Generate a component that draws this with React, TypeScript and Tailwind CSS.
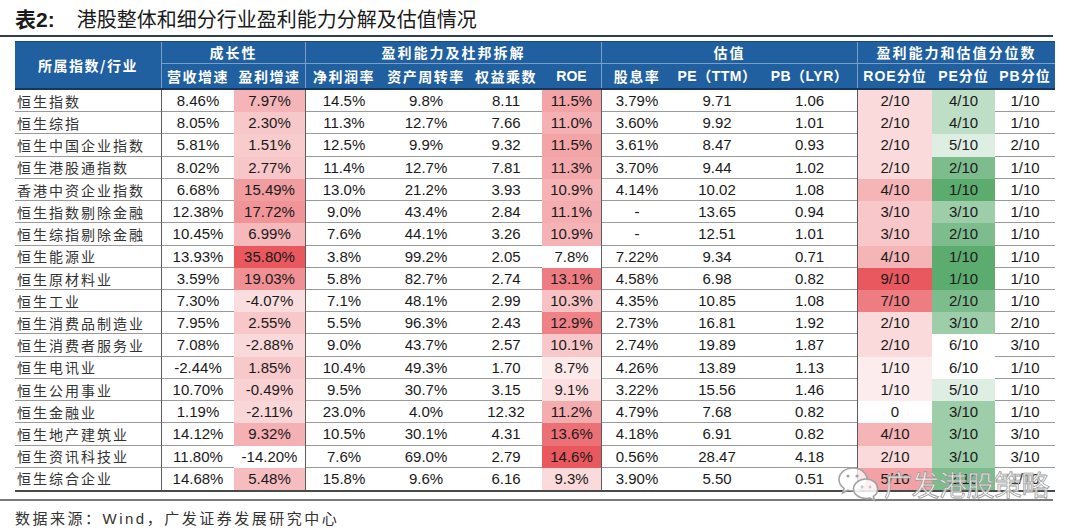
const GRID =
  "grid grid-cols-[147px_72px_72px_76px_88px_72px_60px_70px_90px_96px_74px_63px_60px]";
const SANS = "font-['Liberation_Sans','Noto_Sans_CJK_SC',sans-serif]";
const CJK = "font-['Noto_Sans_CJK_SC','Liberation_Sans',sans-serif]";

// name, 营收, 盈利, 净利润率, 资产周转率, 权益乘数, ROE, 股息率, PE, PB, ROE分位, PE分位, PB分位
const ROWS: string[][] = [
  ["恒生指数", "8.46%", "7.97%", "14.5%", "9.8%", "8.11", "11.5%", "3.79%", "9.71", "1.06", "2/10", "4/10", "1/10"],
  ["恒生综指", "8.05%", "2.30%", "11.3%", "12.7%", "7.66", "11.0%", "3.60%", "9.92", "1.01", "2/10", "4/10", "1/10"],
  ["恒生中国企业指数", "5.81%", "1.51%", "12.5%", "9.9%", "9.32", "11.5%", "3.61%", "8.47", "0.93", "2/10", "5/10", "2/10"],
  ["恒生港股通指数", "8.02%", "2.77%", "11.4%", "12.7%", "7.81", "11.3%", "3.70%", "9.44", "1.02", "2/10", "2/10", "1/10"],
  ["香港中资企业指数", "6.68%", "15.49%", "13.0%", "21.2%", "3.93", "10.9%", "4.14%", "10.02", "1.08", "4/10", "1/10", "1/10"],
  ["恒生指数剔除金融", "12.38%", "17.72%", "9.0%", "43.4%", "2.84", "11.1%", "-", "13.65", "0.94", "3/10", "3/10", "1/10"],
  ["恒生综指剔除金融", "10.45%", "6.99%", "7.6%", "44.1%", "3.26", "10.9%", "-", "12.51", "1.01", "3/10", "2/10", "1/10"],
  ["恒生能源业", "13.93%", "35.80%", "3.8%", "99.2%", "2.05", "7.8%", "7.22%", "9.34", "0.71", "4/10", "1/10", "1/10"],
  ["恒生原材料业", "3.59%", "19.03%", "5.8%", "82.7%", "2.74", "13.1%", "4.58%", "6.98", "0.82", "9/10", "1/10", "1/10"],
  ["恒生工业", "7.30%", "-4.07%", "7.1%", "48.1%", "2.99", "10.3%", "4.35%", "10.85", "1.08", "7/10", "2/10", "1/10"],
  ["恒生消费品制造业", "7.95%", "2.55%", "5.5%", "96.3%", "2.43", "12.9%", "2.73%", "16.81", "1.92", "2/10", "3/10", "2/10"],
  ["恒生消费者服务业", "7.08%", "-2.88%", "9.0%", "43.7%", "2.57", "10.1%", "2.74%", "19.89", "1.87", "2/10", "6/10", "3/10"],
  ["恒生电讯业", "-2.44%", "1.85%", "10.4%", "49.3%", "1.70", "8.7%", "4.26%", "13.89", "1.13", "1/10", "6/10", "1/10"],
  ["恒生公用事业", "10.70%", "-0.49%", "9.5%", "30.7%", "3.15", "9.1%", "3.22%", "15.56", "1.46", "1/10", "5/10", "1/10"],
  ["恒生金融业", "1.19%", "-2.11%", "23.0%", "4.0%", "12.32", "11.2%", "4.79%", "7.68", "0.82", "0", "3/10", "1/10"],
  ["恒生地产建筑业", "14.12%", "9.32%", "10.5%", "30.1%", "4.31", "13.6%", "4.18%", "6.91", "0.82", "4/10", "3/10", "3/10"],
  ["恒生资讯科技业", "11.80%", "-14.20%", "7.6%", "69.0%", "2.79", "14.6%", "0.56%", "28.47", "4.18", "2/10", "3/10", "3/10"],
  ["恒生综合企业", "14.68%", "5.48%", "15.8%", "9.6%", "6.16", "9.3%", "3.90%", "5.50", "0.51", "5/10", "2/10", "1/10"],
];

const RED = [232, 88, 94];
const GREEN = [92, 172, 112];

const mix = (c: number[], t: number) =>
  `rgb(${c.map((x) => Math.round(255 + (x - 255) * t)).join(",")})`;

// Excel-style 2-colour scale: white at one end, full colour at the other.
function colourScale(col: number, c: number[], invert = false) {
  const vals = ROWS.map((r) => parseFloat(r[col]));
  const min = Math.min(...vals);
  const max = Math.max(...vals);
  return vals.map((v) => {
    const t = (v - min) / (max - min);
    return mix(c, invert ? 1 - t : t);
  });
}

const FILLS: Record<number, string[]> = {
  2: colourScale(2, RED),
  6: colourScale(6, RED),
  10: colourScale(10, RED),
  11: colourScale(11, GREEN, true),
};

const RIGHT_RULE = new Set([0, 2, 6, 9]);

function Head({ children, className = "" }: { children: React.ReactNode; className?: string }) {
  return (
    <div className={`flex items-center justify-center text-[14px] font-bold text-white ${className}`}>
      {children}
    </div>
  );
}

function WeChatMark() {
  return (
    <svg width="46" height="38" viewBox="0 0 46 38" fill="none">
      <path
        d="M17 3C9 3 3 8.2 3 14.5c0 3.6 2 6.7 5 8.8L6.6 28l5.4-2.8c1.6.4 3.3.7 5 .7 8 0 14-5.2 14-11.4S25 3 17 3Z"
        fill="rgba(255,255,255,0.75)"
        stroke="#a3a3a3"
        strokeWidth="1.6"
      />
      <path
        d="M30 14c-7 0-12.5 4.4-12.5 9.8S23 33.6 30 33.6c1.4 0 2.8-.2 4-.5l4.6 2.4-1.2-4c2.7-1.8 4.3-4.5 4.3-7.6C41.7 18.4 37 14 30 14Z"
        fill="rgba(255,255,255,0.85)"
        stroke="#a3a3a3"
        strokeWidth="1.6"
      />
      <circle cx="12" cy="11" r="1.6" fill="#a3a3a3" />
      <circle cx="21" cy="11" r="1.6" fill="#a3a3a3" />
      <circle cx="26" cy="22" r="1.4" fill="#c7c7c7" />
      <circle cx="34" cy="22" r="1.4" fill="#c7c7c7" />
    </svg>
  );
}

export default function App() {
  return (
    <div className="relative h-[532px] w-[1080px] overflow-hidden bg-white text-[#1a1a1a]">
      {/* Title */}
      <div className={`flex h-[35px] items-center pl-[15px] pt-[2px] text-[20px] leading-none text-[#1a1a1a] ${CJK}`}>
        <span className="text-[21px] font-bold">
          表<span className={SANS}>2:</span>
        </span>
        <span className="ml-[22px]">港股整体和细分行业盈利能力分解及估值情况</span>
      </div>
      <div className="h-[2px] w-[1053px] bg-[#2f3d4d]" />

      {/* Table */}
      <div className="ml-[15px] mt-[4px] w-[1040px] border-b-2 border-[#4a4a4a]">
        <div
          className={`${GRID} grid-rows-[22px_24px] border-t border-b-2 border-t-[#194a7c] border-b-[#16365a] bg-[#2060a0] ${CJK}`}
        >
          <Head className="row-span-2 border-r border-[#7c9dc4] tracking-[1.5px]">所属指数/行业</Head>
          <Head className="col-span-2 border-r border-b border-[#7c9dc4] tracking-[2px]">成长性</Head>
          <Head className="col-span-4 border-r border-b border-[#7c9dc4] tracking-[2px]">盈利能力及杜邦拆解</Head>
          <Head className="col-span-3 border-r border-b border-[#7c9dc4] tracking-[2px]">估值</Head>
          <Head className="col-span-3 border-b border-[#7c9dc4] tracking-[2px]">盈利能力和估值分位数</Head>

          <Head className="tracking-[1.5px]">营收增速</Head>
          <Head className="border-r border-[#7c9dc4] tracking-[1.5px]">盈利增速</Head>
          <Head className="tracking-[1.5px]">净利润率</Head>
          <Head className="tracking-[1.5px]">资产周转率</Head>
          <Head className="tracking-[1.5px]">权益乘数</Head>
          <Head className={`border-r border-[#7c9dc4] ${SANS}`}>ROE</Head>
          <Head className="tracking-[1.5px]">股息率</Head>
          <Head className={`tracking-[0.5px] ${SANS}`}>PE（TTM）</Head>
          <Head className={`border-r border-[#7c9dc4] tracking-[0.5px] ${SANS}`}>PB（LYR）</Head>
          <Head className={`tracking-[1px] ${SANS}`}>ROE分位</Head>
          <Head className={`tracking-[1px] ${SANS}`}>PE分位</Head>
          <Head className={`tracking-[1px] ${SANS}`}>PB分位</Head>
        </div>

        {ROWS.map((row, ri) => (
          <div
            key={row[0]}
            className={`${GRID} h-[22.22px] ${ri < ROWS.length - 1 ? "border-b border-[#9a9a9a]" : ""}`}
          >
            {row.map((cell, ci) => (
              <div
                key={ci}
                className={`flex items-center ${
                  ci === 0
                    ? `pl-[2px] text-[14px] tracking-[2px] text-[#333] ${CJK}`
                    : `justify-center text-[15px] ${SANS}`
                } ${RIGHT_RULE.has(ci) ? "border-r border-[#5c5c5c]" : ""}`}
                style={FILLS[ci] ? { backgroundColor: FILLS[ci][ri] } : undefined}
              >
                {cell}
              </div>
            ))}
          </div>
        ))}
      </div>

      <div className="mt-[7px] h-[2px] w-[1053px] bg-[#7a7a7a]" />

      {/* Source */}
      <div className={`mt-[8px] pl-[15px] text-[15px] leading-[18px] tracking-[2.5px] text-[#333] ${CJK}`}>
        数据来源：<span className={SANS}>Wind</span>，广发证券发展研究中心
      </div>

      {/* WeChat watermark over the last row */}
      <div className="absolute left-[836px] top-[465px] flex items-center">
        <WeChatMark />
        <span
          className={`ml-[2px] text-[28px] leading-none tracking-[-0.5px] text-white/80 [-webkit-text-stroke:0.8px_#9a9a9a] ${CJK}`}
        >
          广发港股策略
        </span>
      </div>
    </div>
  );
}
